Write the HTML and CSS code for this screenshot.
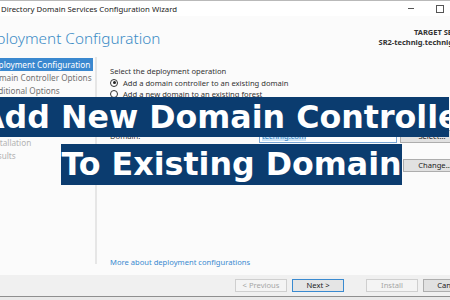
FILE: index.html
```html
<!DOCTYPE html>
<html lang="en">
<head>
  <meta charset="UTF-8" />
  <meta name="viewport" content="width=device-width, initial-scale=1.0"/>
  <title>Add New Domain Controller</title>
  <link rel="stylesheet" href="styles.css">
</head>
<body>
  <div class="window">
    <div class="titlebar">
      <span class="title">Active Directory Domain Services Configuration Wizard</span>
      <div class="controls">
        <span class="min"></span>
        <span class="max"></span>
      </div>
    </div>

    <div class="header">
      <h1>Deployment Configuration</h1>
      <div class="target">
        <div>TARGET SERVER</div>
        <div>SR2-technig.technig.com</div>
      </div>
    </div>

    <div class="main">
      <ul class="nav">
        <li class="active">Deployment Configuration</li>
        <li>Domain Controller Options</li>
        <li>Additional Options</li>
        <li class="off">Paths</li>
        <li class="off">Review Options</li>
        <li class="off">Prerequisites Check</li>
        <li class="off">Installation</li>
        <li class="off">Results</li>
      </ul>

      <div class="content">
        <p class="label">Select the deployment operation</p>
        <label class="radio"><span class="dot checked"></span>Add a domain controller to an existing domain</label>
        <label class="radio"><span class="dot"></span>Add a new domain to an existing forest</label>
        <label class="radio"><span class="dot"></span>Add a new forest</label>

        <p class="label gap">Specify the domain information for this operation</p>
        <div class="row">
          <span class="field-label">Domain:</span>
          <span class="field"><span class="selected">technig.com</span></span>
          <span class="btn">Select...</span>
        </div>

        <p class="label">Supply the credentials to perform this operation</p>
        <div class="row">
          <span class="field-label wide">&lt;No credentials provided&gt;</span>
          <span class="btn">Change...</span>
        </div>

        <a class="more" href="#">More about deployment configurations</a>
      </div>
    </div>

    <div class="footer">
      <span class="btn disabled">&lt; Previous</span>
      <span class="btn focus">Next &gt;</span>
      <span class="btn disabled install">Install</span>
      <span class="btn">Cancel</span>
    </div>
    <div class="taskbar"></div>
  </div>

  <div class="banner">
    <div class="line one">Add New Domain Controller</div>
    <div class="line two">To Existing Domain</div>
  </div>
</body>
</html>
```

FILE: styles.css
```css
body {
  margin: 0;
  width: 450px;
  height: 300px;
  overflow: hidden;
  position: relative;
  background: #fbfbfb;
  font-family: "Noto Sans", "Open Sans", sans-serif;
  color: #333;
}

.window {
  width: 515px;
  height: 300px;
  margin-left: -30px;
  display: flex;
  flex-direction: column;
  background: #fbfbfb;
}

/* title bar */
.titlebar {
  height: 15px;
  border-top: 1px solid #b9b9b9;
  background: #fff;
  display: flex;
  align-items: center;
  padding-left: 7px;
}

.title {
  font-size: 7.8px;
  color: #222;
}

.controls {
  margin-left: auto;
  padding-right: 41px;
  display: flex;
  align-items: center;
  gap: 22px;
}

.min {
  width: 6px;
  height: 1px;
  background: #555;
}

.max {
  width: 6px;
  height: 6px;
  border: 1px solid #555;
}

/* header */
.header {
  height: 40px;
  display: flex;
  align-items: center;
  padding: 4px 14px 0 7px;
  box-sizing: border-box;
  background: #fbfbfb;
}

.header h1 {
  margin: 0;
  font-size: 15.3px;
  font-weight: 300;
  color: #3b8cc6;
}

.target {
  margin-left: auto;
  text-align: right;
  font-size: 7.5px;
  font-weight: bold;
  line-height: 10px;
  color: #333;
  margin-top: -2px;
}

/* main area */
.main {
  flex: 1;
  display: flex;
}

.nav {
  list-style: none;
  margin: 1px 0 11px 0;
  padding: 1px 2px 0 0;
  width: 123px;
  flex-shrink: 0;
  border-right: 2px solid #e6e6e6;
}

.nav li {
  height: 13px;
  line-height: 13px;
  padding-left: 18px;
  font-size: 8.2px;
  color: #737373;
  white-space: nowrap;
}

.nav li.active {
  background: #3a88cf;
  color: #fff;
}

.nav li.off {
  color: #b3b3b3;
}

.content {
  flex: 1;
  display: flex;
  flex-direction: column;
  padding: 9px 10px 8px 13px;
  font-size: 7.6px;
}

.label {
  margin: 0;
  line-height: 12px;
}

.label.gap {
  margin-top: 5px;
}

.radio {
  display: flex;
  align-items: center;
  gap: 5px;
  height: 11.5px;
}

.dot {
  width: 6px;
  height: 6px;
  border: 1px solid #333;
  border-radius: 50%;
  background: #fff;
  position: relative;
}

.dot.checked::after {
  content: "";
  position: absolute;
  left: 1.5px;
  top: 1.5px;
  width: 3px;
  height: 3px;
  border-radius: 50%;
  background: #222;
}

.row {
  display: flex;
  align-items: center;
  gap: 3px;
  height: 15px;
  padding-bottom: 2px;
}

.row > * {
  flex-shrink: 0;
}

.row .btn {
  width: 62px;
}

.field-label {
  width: 146px;
}

.field-label.wide {
  width: 290px;
}

.field {
  width: 134px;
  height: 11px;
  border: 1px solid #7aa7d6;
  background: #fff;
  padding-left: 2px;
  line-height: 11px;
}

.selected {
  background: #cce4f7;
  color: #2d7cc1;
}

.btn {
  height: 11px;
  line-height: 11px;
  width: 50px;
  text-align: center;
  font-size: 7.6px;
  background: #e1e1e1;
  border: 1px solid #adadad;
  color: #222;
}

.more {
  margin-top: auto;
  color: #3a8ad0;
  text-decoration: none;
}

/* footer */
.footer {
  height: 21px;
  background: #f0f0f0;
  display: flex;
  align-items: center;
  justify-content: flex-end;
  gap: 5px;
  padding-right: 10px;
}

.footer .btn.install {
  margin-left: 17px;
}

.btn.disabled {
  background: #f4f4f4;
  border-color: #cfcfcf;
  color: #a6a6a6;
}

.btn.focus {
  border-color: #3a8ad0;
  background: #e5e5e5;
}

.taskbar {
  height: 3px;
  border-top: 1px solid #8f8f8f;
  background: #e9e9e9;
}

/* overlay title */
.banner {
  position: absolute;
  top: 97px;
  left: 0;
  width: 450px;
  font-family: "DejaVu Sans", Verdana, sans-serif;
  font-weight: bold;
  font-size: 31.7px;
  color: #fff;
}

.line {
  background: #0b3c6f;
  white-space: nowrap;
  height: 40px;
  line-height: 40px;
}

.line.one {
  margin-left: -40px;
  width: 469px;
  padding-left: 20px;
}

.line.two {
  margin-top: 7px;
  margin-left: 61px;
  width: 341px;
  height: 41px;
  line-height: 41px;
  text-align: center;
}
```
